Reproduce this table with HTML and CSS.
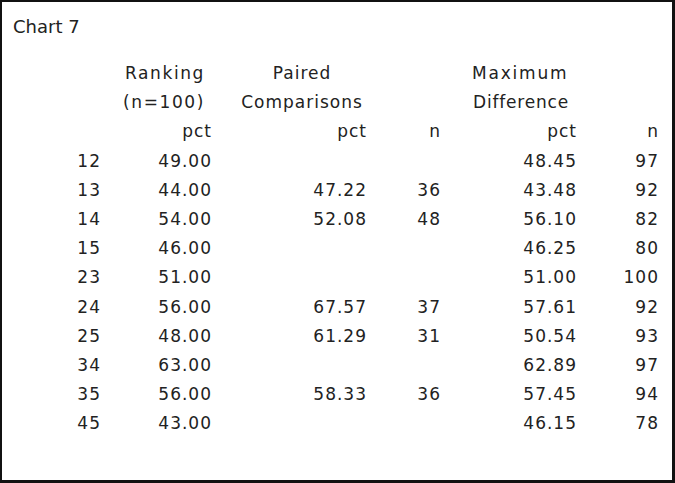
FILE: index.html
```html
<!DOCTYPE html>
<html>
<head>
<meta charset="utf-8">
<link rel="stylesheet" href="styles.css">
</head>
<body>
<div class="frame">
  <div class="title">Chart 7</div>
  <div class="grid">
    <div></div><div class="h h-rank">Ranking</div><div class="h h-paired">Paired</div><div></div><div class="h h-max wide">Maximum</div><div></div>
    <div></div><div class="h h-rank">(n=100)</div><div class="h h-paired">Comparisons</div><div></div><div class="h h-max">Difference</div><div></div>
    <div></div><div class="v">pct</div><div class="v">pct</div><div class="v">n</div><div class="v">pct</div><div class="v">n</div>

    <div class="v">12</div><div class="v">49.00</div><div class="v"></div><div class="v"></div><div class="v">48.45</div><div class="v">97</div>
    <div class="v">13</div><div class="v">44.00</div><div class="v">47.22</div><div class="v">36</div><div class="v">43.48</div><div class="v">92</div>
    <div class="v">14</div><div class="v">54.00</div><div class="v">52.08</div><div class="v">48</div><div class="v">56.10</div><div class="v">82</div>
    <div class="v">15</div><div class="v">46.00</div><div class="v"></div><div class="v"></div><div class="v">46.25</div><div class="v">80</div>
    <div class="v">23</div><div class="v">51.00</div><div class="v"></div><div class="v"></div><div class="v">51.00</div><div class="v">100</div>
    <div class="v">24</div><div class="v">56.00</div><div class="v">67.57</div><div class="v">37</div><div class="v">57.61</div><div class="v">92</div>
    <div class="v">25</div><div class="v">48.00</div><div class="v">61.29</div><div class="v">31</div><div class="v">50.54</div><div class="v">93</div>
    <div class="v">34</div><div class="v">63.00</div><div class="v"></div><div class="v"></div><div class="v">62.89</div><div class="v">97</div>
    <div class="v">35</div><div class="v">56.00</div><div class="v">58.33</div><div class="v">36</div><div class="v">57.45</div><div class="v">94</div>
    <div class="v">45</div><div class="v">43.00</div><div class="v"></div><div class="v"></div><div class="v">46.15</div><div class="v">78</div>
  </div>
</div>
</body>
</html>
```
FILE: styles.css
```css
html, body {
  margin: 0;
  padding: 0;
  background: #fff;
}
.frame {
  box-sizing: border-box;
  width: 675px;
  height: 483px;
  border-style: solid;
  border-color: #111;
  border-width: 2px 3px 3px 2px;
  background: #fff;
  color: #222;
  font-family: "DejaVu Sans", sans-serif;
  font-size: 17px;
}
.title {
  margin-top: 10px;
  padding-left: 11px;
  font-size: 18px;
  line-height: 29px;
  height: 29px;
}
.grid {
  margin-top: 18px;
  display: grid;
  grid-template-columns: 99px 111px 155px 74px 136px 82px;
  grid-auto-rows: 29.2px;
  line-height: 29.2px;
  letter-spacing: 1px;
}
.v {
  text-align: right;
  white-space: nowrap;
}
.h {
  white-space: nowrap;
}
.h-rank {
  text-align: right;
  padding-right: 7px;
  letter-spacing: 1.6px;
}
.h-paired {
  text-align: center;
  padding-left: 25px;
}
.h-max {
  text-align: left;
  padding-left: 32px;
  letter-spacing: 0.8px;
}
.h-max.wide {
  padding-left: 31px;
  letter-spacing: 1.8px;
}
```
